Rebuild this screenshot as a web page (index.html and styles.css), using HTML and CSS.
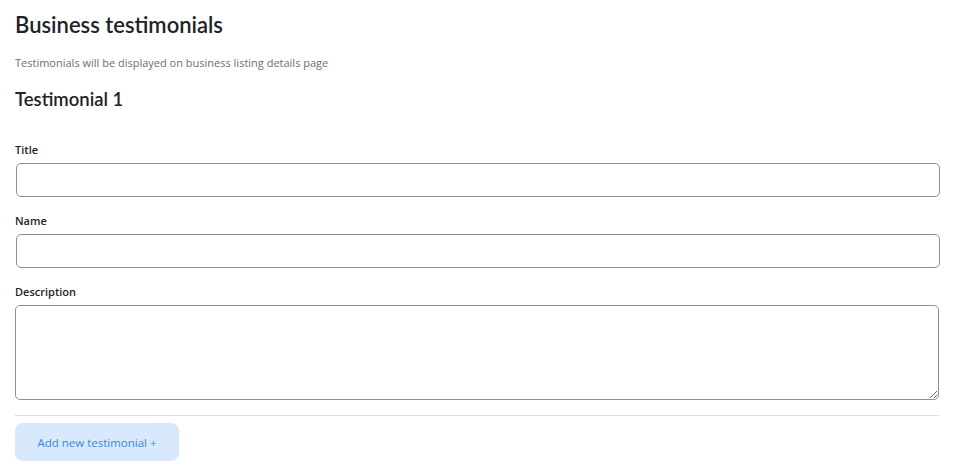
FILE: index.html
```html
<!DOCTYPE html>
<html lang="en">
<head>
<meta charset="utf-8">
<title>Business testimonials</title>
<link rel="stylesheet" href="styles.css">
</head>
<body>
<main class="page">
  <h1 class="page-title">Business testimonials</h1>
  <p class="page-subtitle">Testimonials will be displayed on business listing details page</p>
  <h2 class="section-title">Testimonial 1</h2>
  <form class="form">
    <div class="field">
      <label class="field-label" for="t-title">Title</label>
      <input class="field-input" id="t-title" type="text">
    </div>
    <div class="field">
      <label class="field-label" for="t-name">Name</label>
      <input class="field-input" id="t-name" type="text">
    </div>
    <div class="field field-last">
      <label class="field-label" for="t-desc">Description</label>
      <textarea class="field-textarea" id="t-desc"></textarea>
    </div>
    <hr class="divider">
    <button type="button" class="add-btn">Add new testimonial +</button>
  </form>
</main>
</body>
</html>
```

FILE: styles.css
```css
* { box-sizing: border-box; }
html, body { margin: 0; padding: 0; background: #fff; }
body {
  font-family: "Open Sans", "Noto Sans", "Liberation Sans", sans-serif;
  color: #212529;
}
.page {
  padding: 10px 16px 0 15px;
}
.page-title {
  margin: 0;
  font-family: Lato, "Open Sans", sans-serif;
  font-size: 22px;
  line-height: 30px;
  font-weight: 600;
  color: #1f2328;
}
.page-subtitle {
  margin: 15px 0 0;
  font-size: 11px;
  line-height: 16px;
  color: #6b6f73;
}
.section-title {
  margin: 16px 0 0;
  font-family: Lato, "Open Sans", sans-serif;
  font-size: 18.5px;
  line-height: 24px;
  font-weight: 600;
  color: #1f2328;
}
.form {
  margin-top: 31px;
  display: flex;
  flex-direction: column;
}
.field {
  display: flex;
  flex-direction: column;
  gap: 6px;
  margin-bottom: 16px;
}
.field-last {
  margin-bottom: 15px;
}
.field-label {
  font-size: 11px;
  line-height: 15px;
  font-weight: 600;
  color: #212529;
}
.field-input {
  height: 34px;
  margin-left: 1px;
  margin-right: -1px;
  border: 1px solid #8f8f8f;
  border-radius: 5px;
  background: #fff;
  font: inherit;
}
.field-textarea {
  height: 95px;
  border: 1px solid #8f8f8f;
  border-radius: 5px;
  background: #fff;
  font: inherit;
  resize: vertical;
}
.divider {
  margin: 0 0 7px;
  border: 0;
  border-top: 1px solid #dcdcdc;
}
.add-btn {
  align-self: flex-start;
  width: 164px;
  height: 38px;
  border: 0;
  border-radius: 8px;
  background: #d8e9fd;
  color: #3a86e0;
  font-family: inherit;
  font-size: 11.5px;
  font-weight: 400;
}
```
